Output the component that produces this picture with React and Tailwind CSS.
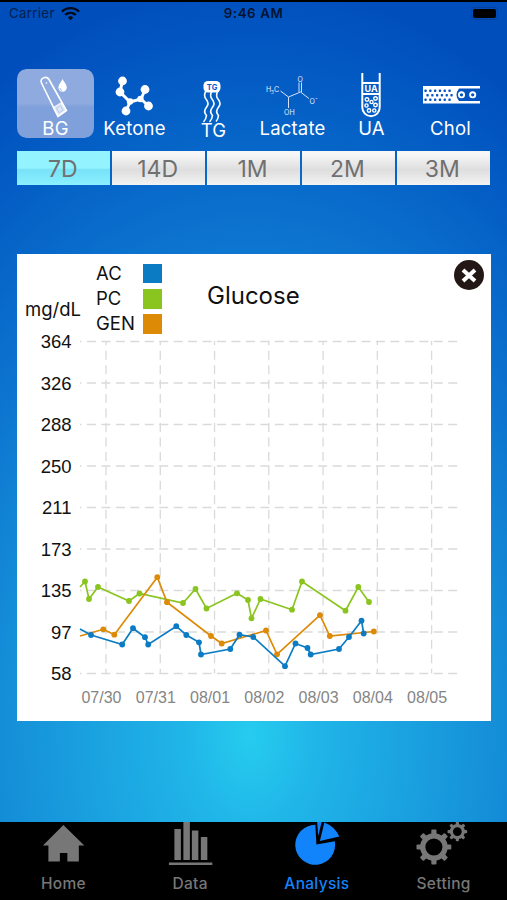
import { IoIosWifi } from 'react-icons/io';

const periods = ['7D', '14D', '1M', '2M', '3M'];

const legend = [
  { label: 'AC', color: 'bg-[#0b7cc4]' },
  { label: 'PC', color: 'bg-[#8ac41e]' },
  { label: 'GEN', color: 'bg-[#dd8a06]' },
];

const yTicks = [364, 326, 288, 250, 211, 173, 135, 97, 58];
const xTicks = ['07/30', '07/31', '08/01', '08/02', '08/03', '08/04', '08/05'];

const series = [
  {
    color: '#8ac41e',
    points: [[80, 587], [85, 581.5], [89, 599], [98, 587], [129, 601], [139.5, 593.5], [183, 603], [195.5, 589], [206.5, 608.5], [237, 593.3], [248, 600], [251.5, 618.3], [260.5, 599], [292, 609.7], [302, 581.5], [345.5, 610.7], [358.3, 587], [369, 602]],
  },
  {
    color: '#dd8a06',
    points: [[80, 636], [103.3, 629.3], [114.3, 634.7], [157.3, 577.2], [167, 602.2], [211, 636], [221.7, 643.5], [266, 630.5], [277, 654.3], [320, 615.2], [329.8, 636], [373.8, 631.5]],
  },
  {
    color: '#0b7cc4',
    points: [[80, 629], [91, 635], [122.2, 644.5], [133, 628.2], [145, 637.2], [148.2, 644.5], [176.3, 626.2], [186.3, 635], [199, 642.3], [201, 654.5], [230.3, 649], [239.5, 634.7], [253.3, 637], [285, 666.2], [295.5, 643.5], [307.5, 648], [310.7, 654.5], [339, 649], [349, 637], [361.5, 620.7], [363.7, 633.5]],
  },
];

function BgIcon() {
  return (
    <svg className="block w-[79px] shrink-0" height="50" viewBox="16 69 79 50" fill="none" stroke="#fff">
      <path d="M41.500 83c-2-5 5-7.500 7.500-3.500l17.500 31-8.500 6z" strokeWidth="1.600" />
      <path d="M53 107.500l8.500-5 5 8-8.500 6z" fill="#fff" fillOpacity=".75" strokeWidth=".8" />
      <path d="M56.500 108l4-2.300 2.500 4.500-4 2.500z" stroke="#a9bde4" strokeWidth=".7" />
      <path d="M62.500 79c1.500 3 4.300 5.500 4.300 8.500a4.200 4.200 0 0 1-8.400 0c0-3 2.800-5.500 4.100-8.500z" fill="#fff" stroke="none" />
      <path d="M60 88a3 3 0 0 0 2 2.500" stroke="#8ba8dc" strokeWidth=".8" />
      <circle cx="46.500" cy="83" r=".8" fill="#fff" stroke="none" />
    </svg>
  );
}

function KetoneIcon() {
  return (
    <svg className="block w-[79px] shrink-0" height="50" viewBox="95 69 79 50" fill="#fff" stroke="#fff">
      <path d="M122.500 81l-2.500 11 10 10 11-3 4-9M130 102l-4 9M141 99l7.500 7" fill="none" strokeWidth="3" strokeLinejoin="round" />
      <g stroke="none">
        <circle cx="122.500" cy="81" r="4.400" />
        <circle cx="120" cy="92" r="4.400" />
        <circle cx="130" cy="101.500" r="3.200" />
        <circle cx="126" cy="111" r="4.400" />
        <circle cx="140.500" cy="99" r="3.200" />
        <circle cx="145" cy="89.500" r="4.400" />
        <circle cx="148.500" cy="106" r="4.400" />
      </g>
    </svg>
  );
}

function TgIcon() {
  return (
    <svg className="block w-[79px] shrink-0" height="54" viewBox="174 69 79 54" fill="none" stroke="#fff">
      <path d="M206 91q-3 4.500.3 8.500t0 8 .2 8q-.5 4-3 6.500M212 91q-3 4.500.3 8.500t0 8 .2 8q-.5 4-3 6.500M218 91q-3 4.500.3 8.500t0 8 .2 8q-.5 4-2.500 6" strokeWidth="1.600" />
      <rect x="203.500" y="81" width="17" height="11.500" rx="4.500" fill="#fff" stroke="none" />
      <text x="212.200" y="89.500" textAnchor="middle" fontSize="7.500" fontWeight="700" fill="#0b57c4" stroke="none">TG</text>
    </svg>
  );
}

function LactateIcon() {
  return (
    <svg className="block w-[79px] shrink-0" height="50" viewBox="253 69 79 50" fill="#e3edfb" stroke="#d3e2f8" strokeWidth="1">
      <path d="M280.500 91l8 6 12-5 8.500 6.500M288.500 97v11M299 92v-9.500M301.500 92v-9.500" fill="none" />
      <g stroke="none" fontSize="7">
        <text x="266" y="92">H</text>
        <text x="271" y="93.500" fontSize="4.500">3</text>
        <text x="274" y="92">C</text>
        <text x="297.500" y="82">O</text>
        <text x="284" y="115">OH</text>
        <text x="309.500" y="103.500">O</text>
        <text x="315" y="100" fontSize="6">-</text>
      </g>
    </svg>
  );
}

function UaIcon() {
  return (
    <svg className="block w-[79px] shrink-0" height="50" viewBox="332 69 79 50" fill="none" stroke="#fff">
      <path d="M362.300 73v34.500a8.700 8.700 0 0 0 17.400 0V73M362.300 83h17.400M362.300 94h17.400" strokeWidth="2" />
      <text x="371.200" y="92" textAnchor="middle" fontSize="9" fontWeight="700" fill="#fff" stroke="none">UA</text>
      <g strokeWidth="1.400">
        <circle cx="367" cy="99.500" r="1.800" />
        <circle cx="375.500" cy="98.500" r="1.800" />
        <circle cx="371.500" cy="102" r="1.600" />
        <circle cx="366.500" cy="105.500" r="1.600" />
        <circle cx="375.500" cy="105" r="1.800" />
        <circle cx="369" cy="110.500" r="1.700" />
        <circle cx="374.300" cy="110.500" r="1.600" />
      </g>
    </svg>
  );
}

function CholIcon() {
  const dots = [];
  for (let row = 0; row < 3; row++) {
    for (let col = 0; col < 6; col++) {
      dots.push([425.5 + col * 4.8 + (row % 2) * 2, 90.7 + row * 4.5]);
    }
  }
  return (
    <svg className="block w-[79px] shrink-0" height="50" viewBox="411 69 79 50">
      <path d="M423 86h57v2.500h-21q-5 6.500 0 12.500h21v2.500h-57z" fill="#fff" />
      {dots.map(([x, y]) => (
        <rect key={`${x}-${y}`} x={x - 1.1} y={y - 1.1} width="2.300" height="2.300" rx=".6" fill="#0a55c4" />
      ))}
      <g fill="none" stroke="#fff" strokeWidth="1.900">
        <circle cx="461.500" cy="94.800" r="2.600" />
        <circle cx="472.700" cy="94.800" r="2.600" />
      </g>
    </svg>
  );
}

const tests = [
  { label: 'BG', Icon: BgIcon, active: true },
  { label: 'Ketone', Icon: KetoneIcon },
  { label: 'TG', Icon: TgIcon },
  { label: 'Lactate', Icon: LactateIcon },
  { label: 'UA', Icon: UaIcon },
  { label: 'Chol', Icon: CholIcon },
];

function StatusBar() {
  return (
    <div className="grid h-[27px] grid-cols-3 items-center border-t-2 border-black px-[9px] pb-[1.5px] text-[13.3px] text-[#04204f]">
      <div className="flex items-center gap-[5px] tracking-[0.3px]">
        Carrier
        <IoIosWifi className="size-[21px] text-[#020a18]" />
      </div>
      <div className="text-center font-semibold tracking-[0.6px] text-[#03142f]">9:46 AM</div>
      <div className="flex items-center justify-end">
        <div className="h-[13px] w-[27px] rounded-[4px] border border-[#0a419b] p-px">
          <div className="h-full rounded-[2px] bg-black" />
        </div>
      </div>
    </div>
  );
}

function GlucoseChart() {
  return (
    <svg className="block w-full" height="390" viewBox="17 331 474 390">
      <g stroke="#dadada" strokeWidth="1.300" strokeDasharray="9 5.450">
        {yTicks.map((tick, i) => (
          <line key={tick} x1="80" x2="459" y1={341.5 + i * 41.5} y2={341.5 + i * 41.5} strokeDashoffset="7.500" />
        ))}
        {xTicks.map((tick, i) => (
          <line key={tick} x1={106 + i * 54.27} x2={106 + i * 54.27} y1="341" y2="673.500" strokeDashoffset="4.700" />
        ))}
      </g>
      <g fontSize="18.500" textAnchor="end" fill="#111" className="font-['Liberation_Sans',sans-serif]">
        {yTicks.map((tick, i) => (
          <text key={tick} x="71.500" y={348.3 + i * 41.5}>{tick}</text>
        ))}
      </g>
      <g fontSize="16" textAnchor="middle" fill="#858585" className="font-['Liberation_Sans',sans-serif]">
        {xTicks.map((tick, i) => (
          <text key={tick} x={101.5 + i * 54.27} y="702.500">{tick}</text>
        ))}
      </g>
      {series.map(({ color, points }) => (
        <g key={color} fill={color}>
          <polyline points={points.join(' ')} fill="none" stroke={color} strokeWidth="1.700" />
          {points.slice(1).map(([x, y]) => (
            <circle key={x} cx={x} cy={y} r="2.900" />
          ))}
        </g>
      ))}
    </svg>
  );
}

function HomeIcon() {
  return (
    <svg className="block w-full" height="50" viewBox="0 822 127 50" fill="#777">
      <path d="M63.500 825l21 20.500h-5.500v16h-11.500v-8.500h-7.500v8.500H48.500v-16H43z" />
    </svg>
  );
}

function DataIcon() {
  return (
    <svg className="block w-full" height="50" viewBox="127 822 127 50" fill="#777">
      <path d="M174.500 829h6.500v31h-6.500zM183.500 822h6.500v38h-6.500zM192 830.500h6.500v29.500H192zM201 837h6.500v23H201zM169 862.500h43.500v2.500H169z" />
    </svg>
  );
}

function AnalysisIcon() {
  return (
    <svg className="block w-full" height="50" viewBox="254 822 127 50" fill="#1284fb">
      <path d="M316.500 844.500l18.500-3.300a20 20 0 1 1-19.500-16.400z" />
      <path d="M320 841l4.500-18.500q10.500 4 15 14z" />
      <path d="M317.300 822h4.500l-3.500 14z" />
    </svg>
  );
}

function Gear({ cx, cy, r, width, tooth }) {
  const angles = [0, 45, 90, 135, 180, 225, 270, 315];
  return (
    <g transform={`translate(${cx} ${cy})`}>
      <circle r={r} fill="none" stroke="#777" strokeWidth={width} />
      {angles.map((a) => (
        <rect key={a} x={-tooth / 2} y={-r - width / 2 - tooth * 0.7} width={tooth} height={tooth + 1} rx="1" fill="#777" transform={`rotate(${a})`} />
      ))}
    </g>
  );
}

function SettingIcon() {
  return (
    <svg className="block w-full" height="50" viewBox="381 822 127 50">
      <Gear cx={435} cy={847} r={11.2} width={5.2} tooth={5.2} />
      <Gear cx={458.5} cy={831.5} r={6} width={3.2} tooth={3.2} />
    </svg>
  );
}

const tabs = [
  { label: 'Home', Icon: HomeIcon },
  { label: 'Data', Icon: DataIcon },
  { label: 'Analysis', Icon: AnalysisIcon, active: true },
  { label: 'Setting', Icon: SettingIcon },
];

export default function App() {
  return (
    <div className="flex h-[900px] w-[507px] flex-col overflow-hidden bg-[radial-gradient(ellipse_510px_760px_at_250px_735px,#26ccee_0%,#20b5e8_13%,#158fd8_48%,#0d76d0_64%,#0561c6_82%,#004dbc_100%)] font-[Inter,sans-serif]">
      <StatusBar />

      <div className="mt-[42px] ml-4 grid h-[69px] w-[474px] grid-cols-6">
        {tests.map(({ label, Icon, active }) => (
          <button
            key={label}
            className={`flex h-[69px] flex-col items-center border-x border-transparent text-[18.5px] tracking-[0.2px] text-white ${
              active ? 'rounded-[10px] bg-linear-to-b from-[#8eaadf] from-50% to-[#7fa0da] to-55% bg-clip-padding' : ''
            }`}
          >
            <Icon />
            <span className={`leading-[18px] ${label === 'TG' ? 'mt-[-2px]' : ''}`}>{label}</span>
          </button>
        ))}
      </div>

      <div className="mt-[13px] ml-[17px] grid h-[34px] w-[473px] grid-cols-5 gap-[1.5px]">
        {periods.map((period, i) => (
          <button
            key={period}
            className={`h-[34px] pt-0.5 pr-0.5 text-[23px] leading-8 text-[#707070] ${
              i === 0
                ? 'bg-linear-to-b from-[#93f4ff] from-50% via-[#78e2f8] via-55% to-[#8bf0ff]'
                : 'bg-linear-to-b from-[#f7f7f7] from-10% via-[#dedede] via-55% to-[#f3f3f3]'
            }`}
          >
            {period}
          </button>
        ))}
      </div>

      <div className="mt-[69px] ml-[17px] h-[467px] w-[474px] bg-white text-[#111]">
        <div className="flex h-[77px]">
          <div className="mt-[43px] ml-2 w-[71px] text-[18.5px] leading-6">mg/dL</div>
          <div className="mt-[7px] w-[66px]">
            {legend.map(({ label, color }) => (
              <div key={label} className="flex h-[25.3px] items-center justify-between text-[18.5px]">
                {label}
                <span className={`size-[19.5px] ${color}`} />
              </div>
            ))}
          </div>
          <h1 className="mt-[26px] ml-[45px] text-[24px] leading-8">Glucose</h1>
          <button className="mt-1.5 mr-[7px] ml-auto size-[30px]">
            <svg viewBox="0 0 30 30">
              <circle cx="15" cy="15" r="15" fill="#231815" />
              <path d="M9 10l12 11M21 10l-12 11" stroke="#fff" strokeWidth="4" />
            </svg>
          </button>
        </div>
        <GlucoseChart />
      </div>

      <nav className="mt-auto grid h-[78px] grid-cols-4 bg-black">
        {tabs.map(({ label, Icon, active }) => (
          <button
            key={label}
            className={`flex flex-col items-center text-[15.5px] font-medium tracking-[0.3px] ${active ? 'text-[#1284fb]' : 'text-[#777]'}`}
          >
            <Icon />
            <span className="leading-[23px]">{label}</span>
          </button>
        ))}
      </nav>
    </div>
  );
}
